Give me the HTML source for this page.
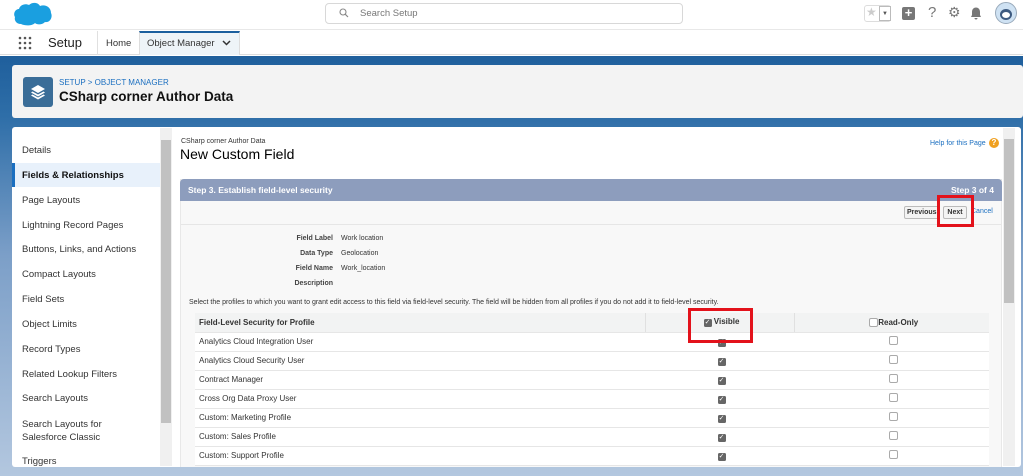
<!DOCTYPE html>
<html><head><meta charset="utf-8"><style>
*{box-sizing:border-box;margin:0;padding:0}
body{width:1023px;height:476px;overflow:hidden;font-family:"Liberation Sans",Arial,sans-serif;background:#fff;position:relative}
.abs{position:absolute}
.side div{position:absolute;left:22px;font-size:9.5px;color:#333}
table{border-collapse:collapse;width:794px;font-size:8px;color:#333}
td{height:19px;border-bottom:1px solid #e6e6e6;padding-left:4px}
.cb{display:inline-block;width:8px;height:8px;border-radius:1.5px;background:#666;color:#fff;font-size:7px;line-height:8px;text-align:center}
.cbe{display:inline-block;width:9px;height:9px;border:1px solid #aaa;border-radius:2px;background:#fff}
.fr{display:flex;white-space:nowrap}
.fr span:first-child{width:77px;text-align:right;font-weight:bold;color:#444}
.fr span+span{margin-left:8px}
</style></head><body>
<div class="abs" style="left:0;top:0;width:1023px;height:30px;background:#fff;border-bottom:1px solid #e8e8e8"></div>
<svg class="abs" style="left:13px;top:2px" width="40" height="24" viewBox="0 0 40 24"><path d="M8 22C3 22 1 18 2 15C0 12 2 7 6 7C7 3 12 1 16 3C19 0 25 0 27 4C32 2 38 5 38 11C40 15 37 21 32 20C29 23 24 23 22 21C19 24 12 24 8 22Z" fill="#1a9fe0"/></svg>
<div class="abs" style="left:325px;top:3px;width:358px;height:21px;border:1px solid #d8d8d8;border-radius:4px;background:#fff"></div>
<svg class="abs" style="left:339px;top:8px" width="10" height="10" viewBox="0 0 10 10"><circle cx="4" cy="4" r="3" fill="none" stroke="#888" stroke-width="1.1"/><path d="M6.3 6.3L9 9" stroke="#888" stroke-width="1.2"/></svg>
<div class="abs" style="left:360px;top:8px;font-size:9.5px;color:#777">Search Setup</div>
<div class="abs" style="left:864px;top:5px;width:27px;height:17px;border:1px solid #ddd;border-radius:3px;background:#fff"></div>
<div class="abs" style="left:866px;top:5px;font-size:12px;color:#ccc">★</div>
<div class="abs" style="left:879px;top:6px;width:12px;height:15px;border:1px solid #bbb;background:#fff;font-size:6px;text-align:center;line-height:14px;color:#555">▼</div>
<div class="abs" style="left:902px;top:7px;width:13px;height:13px;border-radius:2px;background:#777;color:#fff;font-size:13px;line-height:12px;text-align:center;font-weight:bold">+</div>
<div class="abs" style="left:928px;top:4px;font-size:15px;color:#777">?</div>
<div class="abs" style="left:948px;top:4px;font-size:14px;color:#777">⚙</div>
<svg class="abs" style="left:969px;top:6px" width="14" height="14" viewBox="0 0 14 14"><path d="M2 11L3 9V6C3 3 5 1.5 7 1.5S11 3 11 6V9L12 11Z M5.5 12H8.5A1.5 1.5 0 0 1 5.5 12Z" fill="#777"/></svg>
<div class="abs" style="left:995px;top:2px;width:22px;height:22px;border-radius:50%;background:#cfe2f3;border:1px solid #9ab"></div>
<div class="abs" style="left:1000px;top:9px;width:12px;height:11px;border-radius:50%;background:#3d5a80"></div>
<div class="abs" style="left:1002px;top:12px;width:8px;height:6px;border-radius:50%;background:#fff"></div>
<div class="abs" style="left:0;top:31px;width:1023px;height:24px;background:#fff;border-bottom:1px solid #ddd"></div>
<svg class="abs" style="left:18px;top:36px" width="14" height="14" viewBox="0 0 14 14" fill="#555"><circle cx="2" cy="2" r="1.3"/><circle cx="7" cy="2" r="1.3"/><circle cx="12" cy="2" r="1.3"/><circle cx="2" cy="7" r="1.3"/><circle cx="7" cy="7" r="1.3"/><circle cx="12" cy="7" r="1.3"/><circle cx="2" cy="12" r="1.3"/><circle cx="7" cy="12" r="1.3"/><circle cx="12" cy="12" r="1.3"/></svg>
<div class="abs" style="left:48px;top:35px;font-size:13px;color:#222">Setup</div>
<div class="abs" style="left:97px;top:31px;width:1px;height:24px;background:#e0e0e0"></div>
<div class="abs" style="left:106px;top:38px;font-size:9.5px;color:#333">Home</div>
<div class="abs" style="left:139px;top:31px;width:101px;height:24px;background:#eef4f8;border-top:2px solid #1b5f9e;border-left:1px solid #ddd;border-right:1px solid #ddd"></div>
<div class="abs" style="left:147px;top:38px;font-size:9.5px;color:#333">Object Manager</div>
<svg class="abs" style="left:222px;top:40px" width="9" height="6" viewBox="0 0 9 6"><path d="M1 1L4.5 4.5L8 1" stroke="#333" stroke-width="1.5" fill="none"/></svg>
<div class="abs" style="left:0;top:56px;width:1023px;height:420px;background:linear-gradient(#1f5f9c 0px,#2e6ea8 60px,#7c9fc8 200px,#b3c7df 420px)"></div>
<div class="abs" style="left:12px;top:65px;width:1011px;height:53px;background:#f3f3f3;border-radius:3px"></div>
<div class="abs" style="left:23px;top:77px;width:30px;height:30px;background:#3a6d98;border-radius:3px"></div>
<svg class="abs" style="left:30px;top:84px" width="16" height="16" viewBox="0 0 16 16" fill="#fff"><path d="M8 1L15 5L8 9L1 5Z"/><path d="M2.5 7.5L8 10.5L13.5 7.5L15 8.5L8 12.5L1 8.5Z"/><path d="M2.5 10.5L8 13.5L13.5 10.5L15 11.5L8 15.5L1 11.5Z"/></svg>
<div class="abs" style="left:59px;top:78px;font-size:8px;color:#1b6fc0">SETUP &gt; OBJECT MANAGER</div>
<div class="abs" style="left:59px;top:89px;font-size:13.5px;font-weight:bold;color:#111">CSharp corner Author Data</div>
<div class="abs" style="left:12px;top:127px;width:1009px;height:340px;background:#fff;border-radius:3px"></div>
<div class="side">
<div style="top:145px">Details</div>
<div class="abs" style="left:12px!important;top:163px;width:148px;height:24px;background:#e8f1fb;border-left:3px solid #1b6fc0"></div>
<div style="top:170px;font-weight:bold;color:#111">Fields &amp; Relationships</div>
<div style="top:195px">Page Layouts</div>
<div style="top:220px">Lightning Record Pages</div>
<div style="top:244px">Buttons, Links, and Actions</div>
<div style="top:269px">Compact Layouts</div>
<div style="top:294px">Field Sets</div>
<div style="top:319px">Object Limits</div>
<div style="top:344px">Record Types</div>
<div style="top:369px">Related Lookup Filters</div>
<div style="top:393px">Search Layouts</div>
<div style="top:418px;line-height:13px">Search Layouts for<br>Salesforce Classic</div>
<div style="top:456px">Triggers</div>
</div>
<div class="abs" style="left:160px;top:128px;width:12px;height:338px;background:#f0f0f0"></div>
<div class="abs" style="left:161px;top:140px;width:10px;height:283px;background:#c1c1c1"></div>
<div class="abs" style="left:1003px;top:128px;width:12px;height:338px;background:#f0f0f0"></div>
<div class="abs" style="left:1004px;top:139px;width:10px;height:164px;background:#c1c1c1"></div>
<div class="abs" style="left:181px;top:138px;font-size:7px;color:#333">CSharp corner Author Data</div>
<div class="abs" style="left:180px;top:146px;font-size:14px;color:#000">New Custom Field</div>
<div class="abs" style="left:930px;top:140px;font-size:7px;color:#1b6fc0">Help for this Page</div>
<div class="abs" style="left:989px;top:138px;width:10px;height:10px;border-radius:50%;background:#f0a020;color:#fff;font-size:8px;line-height:10px;text-align:center;font-weight:bold">?</div>
<div class="abs" style="left:180px;top:179px;width:822px;height:288px;background:#f8f8f8;border:1px solid #e8e8e8;border-bottom:none"></div>
<div class="abs" style="left:180px;top:179px;width:822px;height:22px;background:#8d9dbd;border-radius:4px 4px 0 0"></div>
<div class="abs" style="left:188px;top:185px;font-size:8.5px;font-weight:bold;color:#fff">Step 3. Establish field-level security</div>
<div class="abs" style="left:951px;top:185px;font-size:8.5px;font-weight:bold;color:#fff">Step 3 of 4</div>
<div class="abs" style="left:181px;top:224px;width:820px;height:1px;background:#e6e6e6"></div>
<div class="abs" style="left:904px;top:206px;width:36px;height:13px;border:1px solid #bbb;border-radius:2px;background:#f4f4f4;font-size:7px;font-weight:bold;color:#333;line-height:11px;padding-left:2px;white-space:nowrap">Previous</div>
<div class="abs" style="left:943px;top:206px;width:24px;height:13px;border:1px solid #bbb;border-radius:2px;background:#f4f4f4;font-size:7px;font-weight:bold;color:#333;line-height:11px;text-align:center">Next</div>
<div class="abs" style="left:971px;top:208px;font-size:7px;color:#1b6fc0">Cancel</div>
<div class="abs" style="left:937px;top:195px;width:37px;height:32px;border:3px solid #e3121b"></div>
<div class="abs" style="left:256px;top:231px;width:250px;font-size:7px;color:#333;line-height:15px">
<div class="fr"><span>Field Label</span><span>Work location</span></div>
<div class="fr"><span>Data Type</span><span>Geolocation</span></div>
<div class="fr"><span>Field Name</span><span>Work_location</span></div>
<div class="fr"><span>Description</span></div>
</div>
<div class="abs" style="left:189px;top:299px;font-size:7px;color:#333;white-space:nowrap">Select the profiles to which you want to grant edit access to this field via field-level security. The field will be hidden from all profiles if you do not add it to field-level security.</div>
<div class="abs" style="left:195px;top:313px;background:#fff">
<table>
<tr style="background:#f2f3f3"><td style="width:450px;font-weight:bold">Field-Level Security for Profile</td><td style="width:149px;text-align:center;border-left:1px solid #e0e0e0"><span class="cb">✓</span> <b>Visible</b></td><td style="text-align:center;border-left:1px solid #e0e0e0"><span class="cbe" style="vertical-align:middle"></span><b>Read-Only</b></td></tr>
<tr><td>Analytics Cloud Integration User</td><td align="center"><span class="cb">✓</span></td><td align="center"><span class="cbe"></span></td></tr>
<tr><td>Analytics Cloud Security User</td><td align="center"><span class="cb">✓</span></td><td align="center"><span class="cbe"></span></td></tr>
<tr><td>Contract Manager</td><td align="center"><span class="cb">✓</span></td><td align="center"><span class="cbe"></span></td></tr>
<tr><td>Cross Org Data Proxy User</td><td align="center"><span class="cb">✓</span></td><td align="center"><span class="cbe"></span></td></tr>
<tr><td>Custom: Marketing Profile</td><td align="center"><span class="cb">✓</span></td><td align="center"><span class="cbe"></span></td></tr>
<tr><td>Custom: Sales Profile</td><td align="center"><span class="cb">✓</span></td><td align="center"><span class="cbe"></span></td></tr>
<tr><td>Custom: Support Profile</td><td align="center"><span class="cb">✓</span></td><td align="center"><span class="cbe"></span></td></tr>
</table></div>
<div class="abs" style="left:688px;top:308px;width:65px;height:35px;border:3px solid #e3121b"></div>
</body></html>
